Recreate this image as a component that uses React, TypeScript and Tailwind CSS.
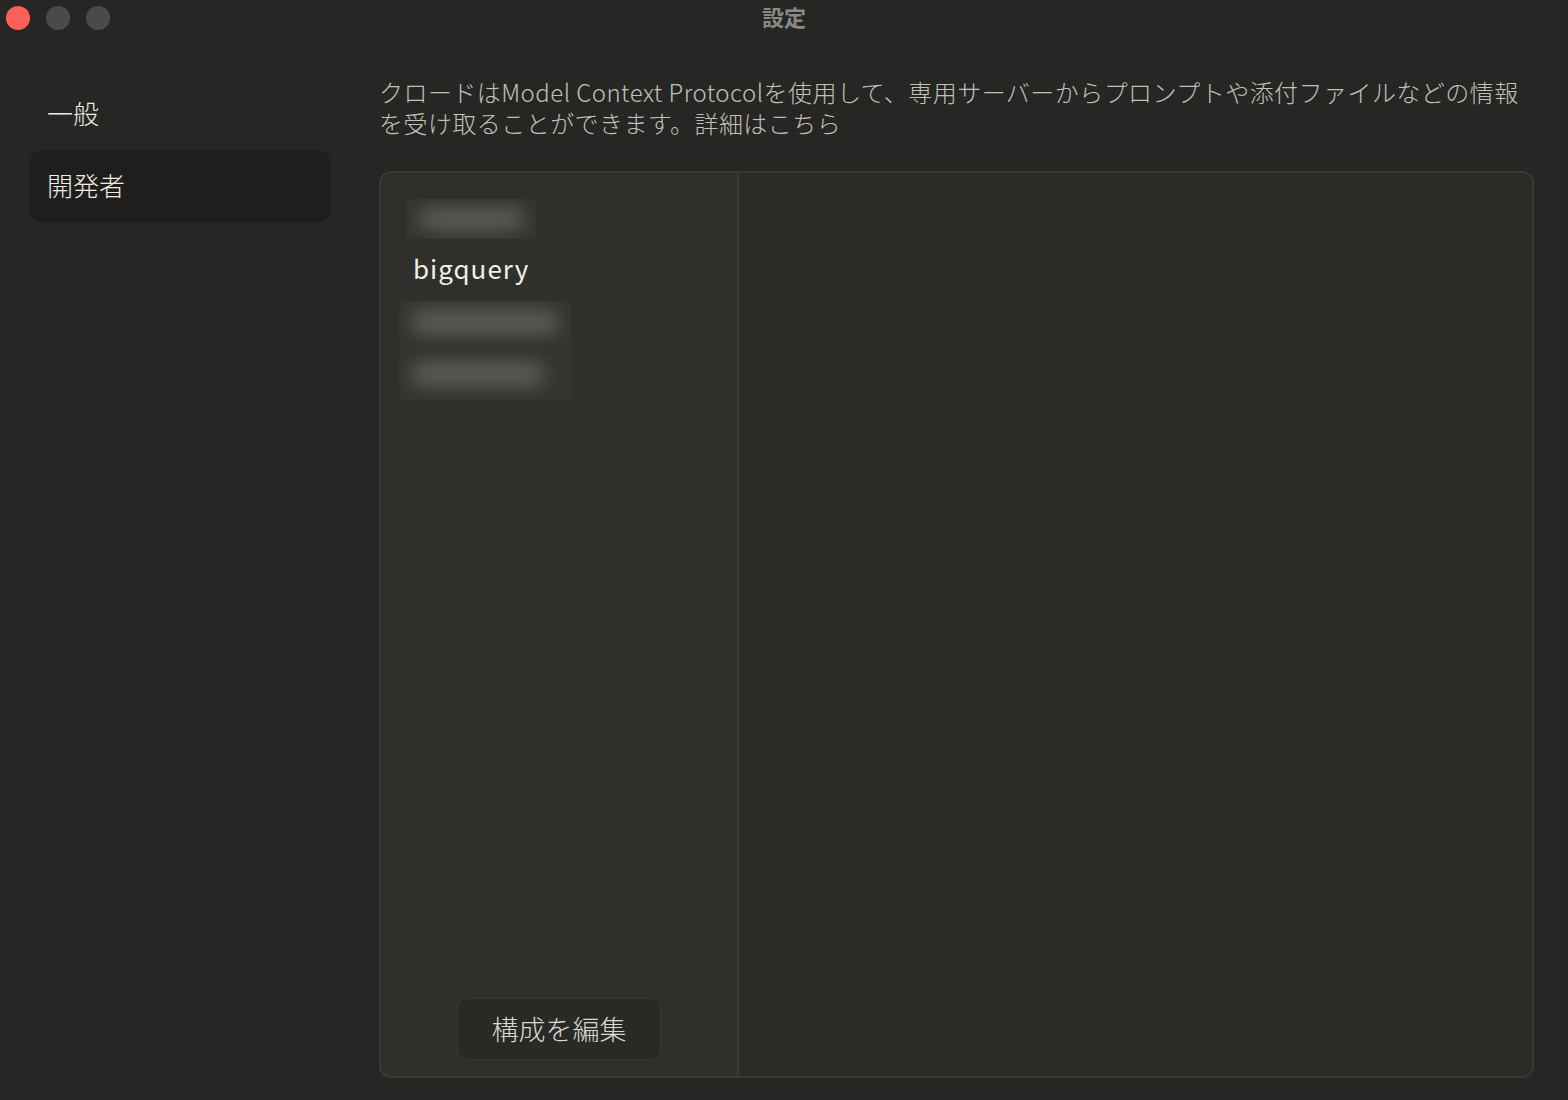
const font = { fontFamily: '"Noto Sans CJK JP", "Noto Sans", sans-serif' };

const BlurBox = ({ bars, className }: { bars: string[]; className: string }) => (
  <div className={`relative overflow-hidden bg-[#343531] ${className}`}>
    {bars.map((b) => (
      <div key={b} className={`absolute rounded-full bg-[#5b5c56] blur-[9px] ${b}`} />
    ))}
  </div>
);

export default function App() {
  return (
    <div
      className="w-[1568px] h-[1100px] bg-[#262624] flex flex-col overflow-hidden"
      style={font}
    >
      {/* title bar */}
      <div className="relative h-[47px] shrink-0 border-b border-[#1f1f1e] flex items-center justify-center">
        <div className="absolute left-[6px] top-[6px] flex gap-[16px]">
          <span className="w-[24px] h-[24px] rounded-full bg-[#fe5f57]" />
          <span className="w-[24px] h-[24px] rounded-full bg-[#4a4a49]" />
          <span className="w-[24px] h-[24px] rounded-full bg-[#4a4a49]" />
        </div>
        <span className="text-[22px] font-bold text-[#8a8985] -mt-[14px]">設定</span>
      </div>

      <div className="flex flex-1 min-h-0">
        {/* sidebar */}
        <nav className="w-[349px] shrink-0 pl-[30px] pr-[19px] pt-[31px] flex flex-col">
          <div className="h-[72px] flex items-center px-[17px] pb-[4px] text-[26px] font-light text-[#ecebe6]">一般</div>
          <div className="h-[72px] flex items-center px-[17px] pb-[4px] text-[26px] font-light text-[#ecebe6] bg-[#1f1e1c] rounded-[12px]">
            開発者
          </div>
        </nav>

        {/* content */}
        <main className="flex-1 min-w-0 pl-[30px] pr-[34px] pt-[29px] pb-[22px] flex flex-col">
          <p className="text-[24px] leading-[31px] font-light tracking-[0.45px] text-[#c2c0b8] pr-[6px]">
            クロードはModel Context Protocolを使用して、専用サーバーからプロンプトや添付ファイルなどの情報を受け取ることができます。詳細はこちら
          </p>

          <div className="mt-[33px] flex-1 min-h-0 flex rounded-[12px] border-2 border-[#393a35] overflow-hidden">
            <div className="w-[358px] shrink-0 bg-[#2f302b] border-r-2 border-[#393a35] flex flex-col">
              <div className="flex flex-col pt-[26px] pl-[18px]">
                <BlurBox className="ml-[7px] w-[130px] h-[40px]" bars={["left-[12px] top-[9px] w-[106px] h-[22px]"]} />
                <div className="ml-[14px] mt-[10px] h-[36px] flex items-center text-[26px] tracking-[1px] text-[#f1efe8]">
                  bigquery
                </div>
                <BlurBox
                  className="mt-[16px] w-[172px] h-[100px]"
                  bars={[
                    "left-[12px] top-[9px] w-[148px] h-[24px]",
                    "left-[12px] top-[61px] w-[134px] h-[24px]",
                  ]}
                />
              </div>
              <div className="mt-auto mb-[16px] flex justify-center">
                <button className="w-[204px] h-[62px] rounded-[10px] bg-[#292926] border border-[#363731] text-[27px] font-light text-[#d9d7cf]">
                  構成を編集
                </button>
              </div>
            </div>
            <div className="flex-1 bg-[#2b2a26]" />
          </div>
        </main>
      </div>
    </div>
  );
}
